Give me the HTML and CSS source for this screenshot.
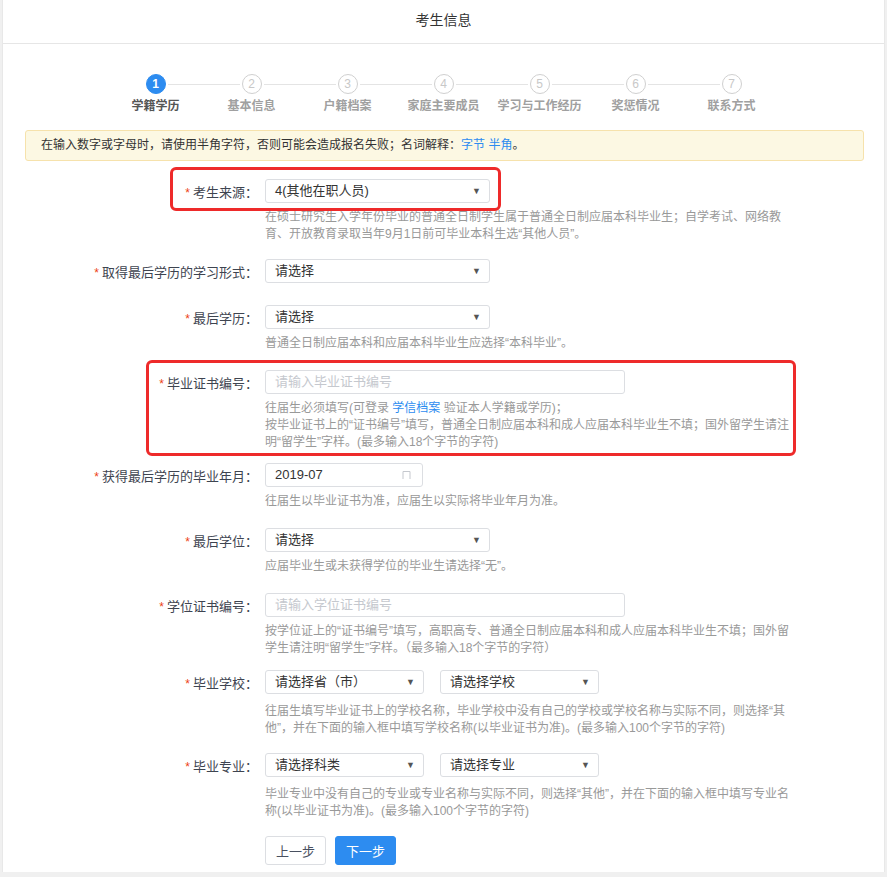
FILE: index.html
```html
<!DOCTYPE html>
<html lang="zh-CN">
<head>
    <meta charset="UTF-8">
    <meta name="viewport" content="width=device-width, initial-scale=1.0">
    <title>考生信息</title>
    <link rel="stylesheet" href="styles.css">
</head>
<body>
    <div class="panel">
        <div class="panel-title">考生信息</div>

        <div class="steps">
            <div class="step active"><span class="num">1</span><span class="name">学籍学历</span></div>
            <div class="step"><span class="num">2</span><span class="name">基本信息</span></div>
            <div class="step"><span class="num">3</span><span class="name">户籍档案</span></div>
            <div class="step"><span class="num">4</span><span class="name">家庭主要成员</span></div>
            <div class="step"><span class="num">5</span><span class="name">学习与工作经历</span></div>
            <div class="step"><span class="num">6</span><span class="name">奖惩情况</span></div>
            <div class="step last"><span class="num">7</span><span class="name">联系方式</span></div>
        </div>

        <div class="form-body">
            <div class="alert">在输入数字或字母时，请使用半角字符，否则可能会造成报名失败；名词解释：<a href="#">字节</a> <a href="#">半角</a>。</div>

            <div class="item gap-m">
                <span class="mark mark-1"></span>
                <div class="row">
                    <label class="label"><i>*</i>考生来源：</label>
                    <div class="select"><span>4(其他在职人员)</span></div>
                </div>
                <div class="help">在硕士研究生入学年份毕业的普通全日制学生属于普通全日制应届本科毕业生；自学考试、网络教<br>育、开放教育录取当年9月1日前可毕业本科生选“其他人员”。</div>
            </div>

            <div class="item gap-xl">
                <div class="row">
                    <label class="label"><i>*</i>取得最后学历的学习形式：</label>
                    <div class="select"><span>请选择</span></div>
                </div>
            </div>

            <div class="item gap-l">
                <div class="row">
                    <label class="label"><i>*</i>最后学历：</label>
                    <div class="select"><span>请选择</span></div>
                </div>
                <div class="help">普通全日制应届本科和应届本科毕业生应选择“本科毕业”。</div>
            </div>

            <div class="item gap-s">
                <span class="mark mark-2"></span>
                <div class="row">
                    <label class="label"><i>*</i>毕业证书编号：</label>
                    <div class="input wide placeholder">请输入毕业证书编号</div>
                </div>
                <div class="help">往届生必须填写(可登录 <a href="#">学信档案</a> 验证本人学籍或学历)；<br>按毕业证书上的“证书编号”填写，普通全日制应届本科和成人应届本科毕业生不填；国外留学生请注<br>明“留学生”字样。(最多输入18个字节的字符)</div>
            </div>

            <div class="item gap-l">
                <div class="row">
                    <label class="label"><i>*</i>获得最后学历的毕业年月：</label>
                    <div class="input date">2019-07
                        <svg class="cal" width="9" height="10" viewBox="0 0 9 10"><path d="M1 9V1.5h7V9M1 1.5h1.5M6.5 1.5H8" fill="none" stroke="#c5c8ce" stroke-width="1"/></svg>
                    </div>
                </div>
                <div class="help">往届生以毕业证书为准，应届生以实际将毕业年月为准。</div>
            </div>

            <div class="item gap-l">
                <div class="row">
                    <label class="label"><i>*</i>最后学位：</label>
                    <div class="select"><span>请选择</span></div>
                </div>
                <div class="help">应届毕业生或未获得学位的毕业生请选择“无”。</div>
            </div>

            <div class="item gap-s2">
                <div class="row">
                    <label class="label"><i>*</i>学位证书编号：</label>
                    <div class="input wide placeholder">请输入学位证书编号</div>
                </div>
                <div class="help">按学位证上的“证书编号”填写，高职高专、普通全日制应届本科和成人应届本科毕业生不填；国外留<br>学生请注明“留学生”字样。（最多输入18个字节的字符）</div>
            </div>

            <div class="item gap-m">
                <div class="row">
                    <label class="label"><i>*</i>毕业学校：</label>
                    <div class="select half"><span>请选择省（市）</span></div>
                    <div class="select half"><span>请选择学校</span></div>
                </div>
                <div class="help loose">往届生填写毕业证书上的学校名称，毕业学校中没有自己的学校或学校名称与实际不同，则选择“其<br>他”，并在下面的输入框中填写学校名称(以毕业证书为准)。(最多输入100个字节的字符)</div>
            </div>

            <div class="item gap-m">
                <div class="row">
                    <label class="label"><i>*</i>毕业专业：</label>
                    <div class="select half"><span>请选择科类</span></div>
                    <div class="select half"><span>请选择专业</span></div>
                </div>
                <div class="help loose">毕业专业中没有自己的专业或专业名称与实际不同，则选择“其他”，并在下面的输入框中填写专业名<br>称(以毕业证书为准)。(最多输入100个字节的字符)</div>
            </div>

            <div class="actions">
                <button class="btn">上一步</button>
                <button class="btn primary">下一步</button>
            </div>
        </div>
    </div>
</body>
</html>
```

FILE: styles.css
```css
body {
    margin: 0;
    background: #f0f0f0;
    color: #333;
    font-family: "Liberation Sans", "Noto Sans CJK SC", sans-serif;
    font-size: 13px;
}

.panel {
    margin: 0 2px;
    background: #fff;
    border-left: 1px solid #e8e8e8;
    border-right: 1px solid #e8e8e8;
    padding-bottom: 7px;
}

.panel-title {
    height: 43px;
    line-height: 41px;
    text-align: center;
    font-size: 14px;
    color: #333;
    border-bottom: 1px solid #e6e6e6;
}

/* steps */
.steps {
    display: flex;
    justify-content: center;
    padding-top: 30px;
}

.step {
    width: 96px;
    display: flex;
    flex-direction: column;
    align-items: center;
    position: relative;
}

.step::after {
    content: "";
    position: absolute;
    top: 10px;
    left: 60px;
    width: 72px;
    height: 1px;
    background: #e4e4e4;
}

.step.last::after {
    display: none;
}

.step .num {
    width: 18px;
    height: 18px;
    border: 1px solid #d0d0d0;
    border-radius: 50%;
    color: #c8c8c8;
    font-size: 12px;
    line-height: 18px;
    text-align: center;
    background: #fff;
}

.step .name {
    margin-top: 5px;
    font-size: 12px;
    line-height: 14px;
    font-weight: bold;
    color: #a0a0a0;
    white-space: nowrap;
}

.step.active .num {
    background: #2d8cf0;
    border-color: #2d8cf0;
    color: #fff;
    font-weight: bold;
}

.step.active .name {
    color: #555;
}

/* form */
.form-body {
    padding: 17px 20px 0 22px;
}

.alert {
    height: 29px;
    line-height: 29px;
    padding-left: 15px;
    background: #fcf8e3;
    border: 1px solid #f6e2ac;
    border-radius: 3px;
    font-size: 12px;
    color: #333;
    margin-bottom: 18px;
}

a {
    color: #2d8cf0;
    text-decoration: none;
}

.item {
    position: relative;
}

.gap-s { margin-bottom: 12px; }
.gap-s2 { margin-bottom: 13px; }
.gap-m { margin-bottom: 16px; }
.gap-l { margin-bottom: 18px; }
.gap-xl { margin-bottom: 22px; }

.row {
    display: flex;
    align-items: center;
    gap: 16px;
}

.label {
    width: 233px;
    margin-right: -9px;
    text-align: right;
    color: #3e4450;
    font-size: 13px;
    white-space: nowrap;
}

.label i {
    font-style: normal;
    color: #ed3f14;
    font-size: 12px;
    margin-right: 3px;
}

.select,
.input {
    box-sizing: border-box;
    height: 24px;
    border: 1px solid #dcdee2;
    border-radius: 3px;
    padding: 0 9px;
    line-height: 22px;
    font-size: 13px;
    color: #333;
    background: #fff;
    position: relative;
}

.select {
    width: 225px;
}

.select::after {
    content: "▼";
    position: absolute;
    right: 8px;
    top: 0;
    font-size: 9px;
    color: #555;
}

.select.half {
    width: 159px;
}

.input.wide {
    width: 360px;
}

.input.date {
    width: 158px;
}

.input .cal {
    position: absolute;
    right: 11px;
    top: 6px;
}

.placeholder {
    color: #c5c8ce;
}

.help {
    margin-top: 6px;
    margin-left: 240px;
    font-size: 12px;
    line-height: 17px;
    color: #999;
    white-space: nowrap;
}

.help.loose {
    margin-top: 9px;
}

/* red annotation frames */
.mark {
    position: absolute;
    box-sizing: border-box;
    border: 3px solid #ee2a2a;
    border-radius: 6px;
    pointer-events: none;
}

.mark-1 {
    left: 145px;
    top: -12px;
    width: 331px;
    height: 44px;
}

.mark-2 {
    left: 121px;
    top: -10px;
    width: 650px;
    height: 96px;
}

.actions {
    display: flex;
    gap: 9px;
    margin-left: 240px;
}

.btn {
    height: 29px;
    padding: 0 10px;
    font-family: inherit;
    font-size: 13px;
    color: #495060;
    background: #fff;
    border: 1px solid #dcdee2;
    border-radius: 3px;
}

.btn.primary {
    color: #fff;
    background: #2d8cf0;
    border-color: #2d8cf0;
}
```
